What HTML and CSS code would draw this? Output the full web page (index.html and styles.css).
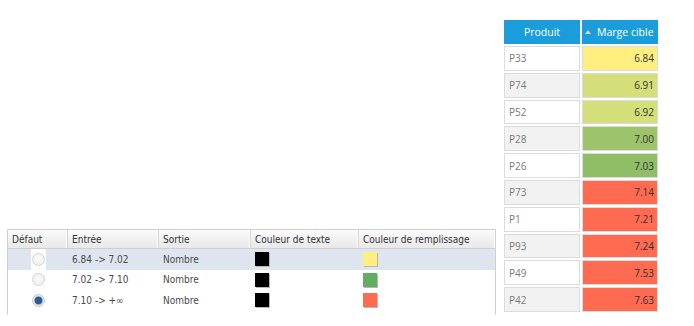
FILE: index.html
```html
<!DOCTYPE html>
<html lang="fr">
<head>
<meta charset="utf-8">
<link rel="stylesheet" href="styles.css">
</head>
<body>
<div class="page">
  <div class="rules">
    <div class="rules-head">
      <div class="hc c1">Défaut</div>
      <div class="hc c2">Entrée</div>
      <div class="hc c3">Sortie</div>
      <div class="hc c4">Couleur de texte</div>
      <div class="hc c5">Couleur de remplissage</div>
    </div>
    <div class="rrow selected">
      <div class="rc c1"><span class="radio-box"><span class="radio"></span></span></div>
      <div class="rc c2">6.84 -&gt; 7.02</div>
      <div class="rc c3">Nombre</div>
      <div class="rc c4"><span class="swatch sw-black"></span></div>
      <div class="rc c5"><span class="swatch sw-yellow"></span></div>
    </div>
    <div class="rrow">
      <div class="rc c1"><span class="radio"></span></div>
      <div class="rc c2">7.02 -&gt; 7.10</div>
      <div class="rc c3">Nombre</div>
      <div class="rc c4"><span class="swatch sw-black"></span></div>
      <div class="rc c5"><span class="swatch sw-green"></span></div>
    </div>
    <div class="rrow">
      <div class="rc c1"><span class="radio checked"></span></div>
      <div class="rc c2">7.10 -&gt; +∞</div>
      <div class="rc c3">Nombre</div>
      <div class="rc c4"><span class="swatch sw-black"></span></div>
      <div class="rc c5"><span class="swatch sw-red"></span></div>
    </div>
  </div>

  <div class="grid">
    <div class="gh">Produit</div>
    <div class="gh sorted"><span class="arrow"></span>Marge cible</div>

    <div class="pc">P33</div><div class="vc v-yellow">6.84</div>
    <div class="pc alt">P74</div><div class="vc v-lime">6.91</div>
    <div class="pc">P52</div><div class="vc v-lime">6.92</div>
    <div class="pc alt">P28</div><div class="vc v-green1">7.00</div>
    <div class="pc">P26</div><div class="vc v-green2">7.03</div>
    <div class="pc alt">P73</div><div class="vc v-red">7.14</div>
    <div class="pc">P1</div><div class="vc v-red">7.21</div>
    <div class="pc alt">P93</div><div class="vc v-red">7.24</div>
    <div class="pc">P49</div><div class="vc v-red">7.53</div>
    <div class="pc alt">P42</div><div class="vc v-red">7.63</div>
  </div>
</div>
</body>
</html>
```

FILE: styles.css
```css
html, body {
  margin: 0;
  padding: 0;
  background: #ffffff;
}

.page {
  display: flex;
  align-items: flex-start;
  padding-left: 7px;
}

/* ---------- left rules table ---------- */
.rules {
  margin-top: 229px;
  width: 487px;
  height: 85px;
  border: 1px solid #d0d0d0;
  border-bottom: none;
  font-family: "DejaVu Sans Condensed", "DejaVu Sans", sans-serif;
  font-size: 10px;
  color: #4a4a4a;
}

.rules-head {
  display: flex;
  height: 18px;
  background: linear-gradient(#fbfbfb, #e8e8e8);
  border-bottom: 1px solid #d0d0d0;
  color: #333;
}

.hc {
  display: flex;
  align-items: center;
  padding-left: 4px;
  box-sizing: border-box;
  border-right: 1px solid #d6d6d6;
  box-shadow: inset -1px 0 0 #fdfdfd;
}

.hc.c5 { border-right: none; }

.c1 { width: 60px; }
.c2 { width: 91px; }
.c3 { width: 92px; }
.c4 { width: 108px; }
.c5 { flex: 1; }

.rrow {
  display: flex;
  height: 20.6px;
}

.rrow.selected {
  background: #dfe5ee;
}

.rc {
  display: flex;
  align-items: center;
  padding-left: 4px;
  box-sizing: border-box;
}

.rc.c1 {
  justify-content: center;
  padding-left: 0;
}

.radio-box {
  display: flex;
  align-items: center;
  justify-content: center;
  width: 15px;
  height: 100%;
  background: #ffffff;
}

.radio {
  display: block;
  width: 13px;
  height: 13px;
  box-sizing: border-box;
  border-radius: 50%;
  border: 1px solid #d4d4d4;
  background: radial-gradient(circle at 50% 40%, #fbfbfb, #ebebeb);
}

.radio.checked {
  border-color: #c8c8c8;
  background: radial-gradient(circle, #2c5a96 0, #2c5a96 3.5px, #b8c3d2 4.2px, #e8e8e8 5px);
}

.swatch {
  display: block;
  width: 14px;
  height: 14px;
  box-shadow: 1px 1px 0 #b8b8b8;
}

.sw-black { background: #000000; }
.sw-yellow { background: #ffee80; }
.sw-green { background: #62ad5f; }
.sw-red { background: #ff6b50; }

/* ---------- right product grid ---------- */
.grid {
  margin-top: 20px;
  margin-left: 8px;
  display: grid;
  grid-template-columns: 76px 76px;
  grid-template-rows: 24px repeat(10, 24.8px);
  gap: 2px;
  font-family: "Open Sans", "Noto Sans", sans-serif;
  font-size: 10px;
}

.gh {
  display: flex;
  align-items: center;
  justify-content: center;
  background: #1a9dda;
  color: #ffffff;
  font-size: 10.5px;
}

.gh.sorted {
  justify-content: flex-start;
  padding-left: 3px;
}

.arrow {
  width: 0;
  height: 0;
  border-left: 3px solid transparent;
  border-right: 3px solid transparent;
  border-bottom: 4px solid #d6d6d6;
  margin-right: 6px;
  margin-top: -1px;
}

.pc, .vc {
  display: flex;
  align-items: center;
  box-sizing: border-box;
  border: 1px solid #dcdcdc;
}

.pc {
  padding-left: 4px;
  background: #ffffff;
  color: #7a7a7a;
}

.pc.alt {
  background: #f2f2f2;
}

.vc {
  justify-content: flex-end;
  padding-right: 3px;
  color: #333333;
}

.v-yellow { background: #ffef80; }
.v-lime { background: #d4df7a; }
.v-green1 { background: #9dc46b; }
.v-green2 { background: #8fbe66; }
.v-red { background: #ff6b50; }
```
